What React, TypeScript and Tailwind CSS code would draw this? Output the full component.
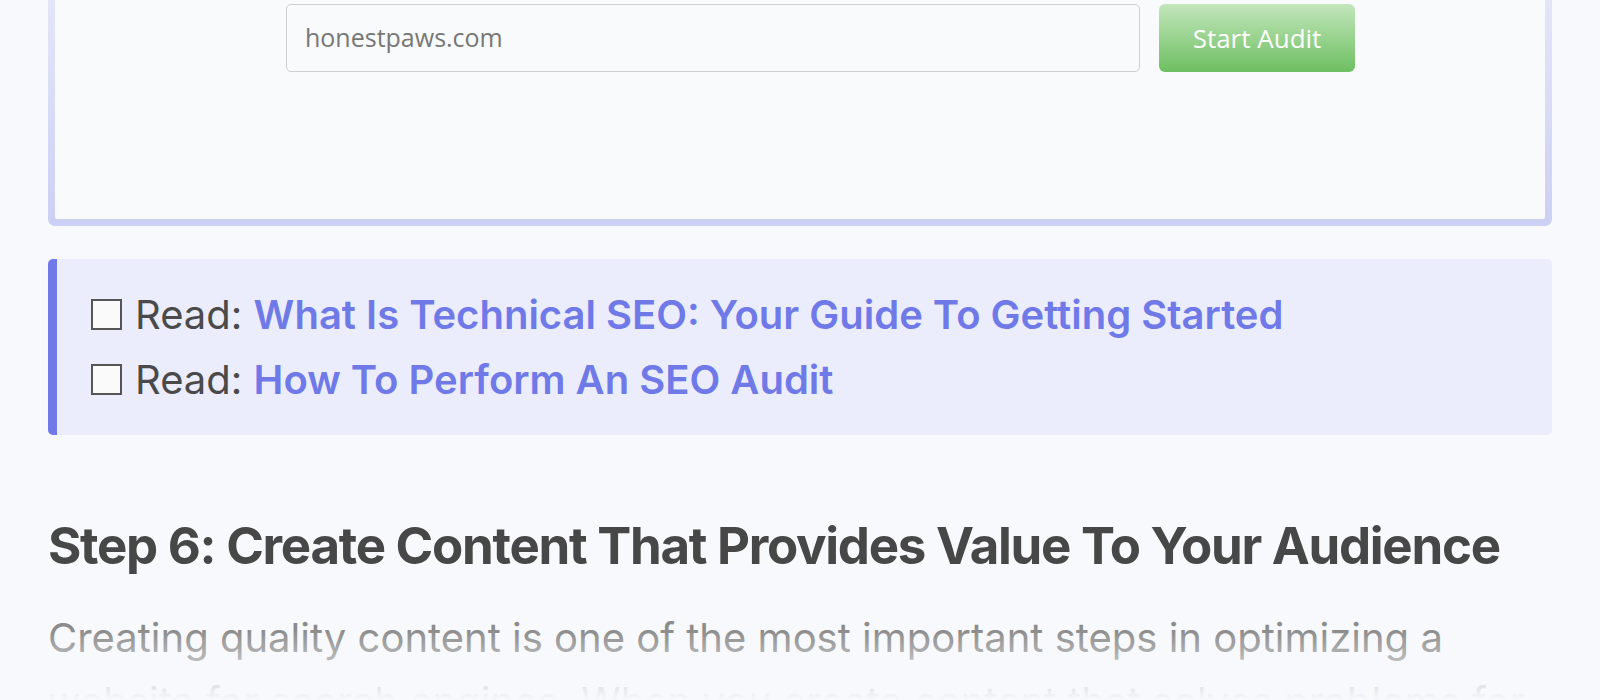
import React from "react";

export default function App() {
  return (
    <div className="relative w-[1600px] h-[700px] overflow-hidden bg-[#f8f9fc]" style={{ fontFamily: "Inter, 'Noto Sans', sans-serif" }}>
      <div className="ml-[48px] w-[1504px]">
        {/* Audit box */}
        <div className="-mt-[100px] rounded-[7px] p-[7px] bg-gradient-to-b from-[#eef0fb] to-[#cbd0f4]">
          <div className="rounded-[2px] bg-[#f9fafc] pt-[97px] pb-[147px] pl-[231px] flex items-center gap-[19px]">
            <div className="w-[854px] h-[68px] rounded-[5px] border border-[#cfcfcf] bg-[#f9fafc] flex items-center pl-[18px] text-[25px] text-[#777]" style={{ fontFamily: "'Open Sans', 'DejaVu Sans', sans-serif" }}>
              honestpaws.com
            </div>
            <button className="w-[196px] h-[68px] rounded-[6px] bg-gradient-to-b from-[#c2e6bb] to-[#6cbf60] text-white text-[26px]" style={{ fontFamily: "'Open Sans', 'DejaVu Sans', sans-serif" }}>
              Start Audit
            </button>
          </div>
        </div>

        {/* Callout */}
        <div className="mt-[33px] rounded-[5px] border-l-[9px] border-[#6f7ae8] bg-[#ecedfc] pl-[34px] py-[23px] text-[40px] leading-[65px]">
          <div className="flex items-center">
            <span className="inline-block w-[31px] h-[31px] border-2 border-[#555] bg-[#fafafa] mr-[13px]"></span>
            <span className="text-[#4a4a4a]">Read:&nbsp;</span>
            <span className="text-[#6f7ae8] font-semibold">What Is Technical SEO: Your Guide To Getting Started</span>
          </div>
          <div className="flex items-center">
            <span className="inline-block w-[31px] h-[31px] border-2 border-[#555] bg-[#fafafa] mr-[13px]"></span>
            <span className="text-[#4a4a4a]">Read:&nbsp;</span>
            <span className="text-[#6f7ae8] font-semibold">How To Perform An SEO Audit</span>
          </div>
        </div>

        {/* Heading */}
        <h2 className="mt-[79px] text-[51px] leading-[64px] font-bold text-[#474747] tracking-[-1.28px]">
          Step 6: Create Content That Provides Value To Your Audience
        </h2>

        <p className="mt-[28px] text-[40px] leading-[64px] text-[#8c8c8c]">
          Creating quality content is one of the most important steps in optimizing a website for search engines. When you create content that solves problems for
        </p>
      </div>
      <div className="absolute left-0 right-0 bottom-0 h-[70px] bg-gradient-to-b from-[#f8f9fc00] to-[#f8f9fc]"></div>
    </div>
  );
}
